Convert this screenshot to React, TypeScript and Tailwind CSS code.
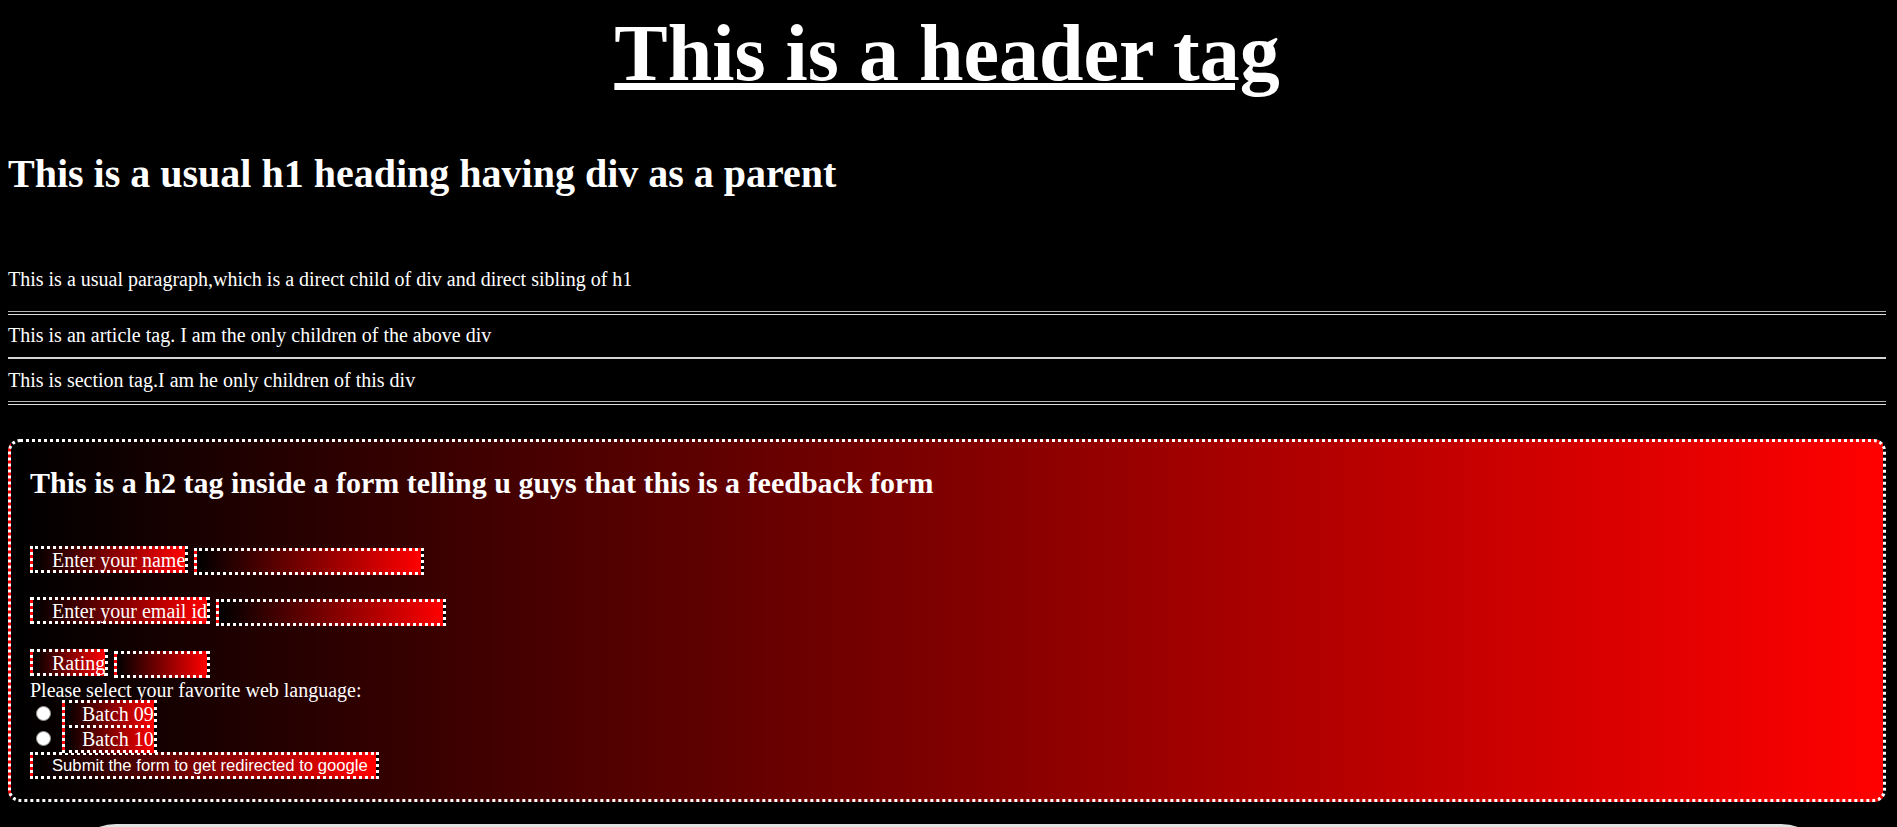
const grad = "bg-[linear-gradient(to_right,#000,#f00)]"

function Field({ label, width, className }: { label: string; width: string; className: string }) {
  return (
    <div className={`flex items-start ${className}`}>
      <label className={`h-[27px] border-[3px] border-dotted border-white ${grad} pl-[19px] text-[20px] leading-[22px]`}>
        {label}
      </label>
      <input
        type="text"
        className={`ml-[6px] mt-[2px] h-[27px] ${width} border-[3px] border-dotted border-white ${grad} outline-none`}
      />
    </div>
  )
}

function Radio({ label }: { label: string }) {
  return (
    <div className="text-[20px] leading-[25px]">
      <span className="ml-[6px] mr-[11px] inline-block h-[15px] w-[15px] rounded-full border border-[#8f8f8f] bg-white" />
      <label className={`border-[3px] border-dotted border-white ${grad} pl-[17px]`}>{label}</label>
    </div>
  )
}

export default function App() {
  return (
    <div className="h-screen overflow-hidden bg-black pl-[8px] pr-[11px] font-['Liberation_Serif','Times_New_Roman',serif] text-white">
      <header className="mt-[7px] text-center text-[80px] font-bold leading-[92px] underline decoration-[7px] underline-offset-[3px]">
        This is a header tag
      </header>

      <div>
        <h1 className="mt-[52px] text-[40px] font-bold leading-[46px]">This is a usual h1 heading having div as a parent</h1>
        <p className="mt-[71px] text-[20px] leading-[23px]">
          This is a usual paragraph,which is a direct child of div and direct sibling of h1
        </p>
      </div>

      {/* hr + article + section */}
      <div className="mt-[20px] h-[4px] border-y border-t-[#b5b5b5] border-b-[#dedede]" />
      <article className="mt-[9px] text-[20px] leading-[23px]">This is an article tag. I am the only children of the above div</article>
      <div className="mt-[10px] h-[2px] bg-[#d4d4d4]" />
      <section className="mt-[10px] text-[20px] leading-[23px]">This is section tag.I am he only children of this div</section>
      <div className="mt-[9px] h-[4px] border-y border-t-[#b5b5b5] border-b-[#dedede]" />

      {/* feedback form */}
      <form className={`mt-[34px] rounded-[12px] border-[3px] border-dotted border-white ${grad} pb-[20px] pl-[19px]`}>
        <h2 className="mt-[24px] text-[30px] font-bold leading-[34px]">
          This is a h2 tag inside a form telling u guys that this is a feedback form
        </h2>

        <Field label="Enter your name" width="w-[230px]" className="mt-[46px]" />
        <Field label="Enter your email id" width="w-[230px]" className="mt-[22px]" />
        <Field label="Rating" width="w-[96px]" className="mt-[23px]" />

        <p className="mt-[1px] text-[20px] leading-[23px]">Please select your favorite web language:</p>
        <Radio label="Batch 09" />
        <Radio label="Batch 10" />

        <div>
          <button
            type="button"
            className={`flex h-[27px] items-center border-[3px] border-dotted border-white ${grad} pl-[19px] pr-[8px] font-['Liberation_Sans',Arial,sans-serif] text-[16.67px] text-white`}
          >
            Submit the form to get redirected to google
          </button>
        </div>
      </form>

      <div className="ml-[58px] mr-[55px] mt-[22px] h-[80px] rounded-t-[50px] bg-[#e2e2e2]" />
    </div>
  )
}
